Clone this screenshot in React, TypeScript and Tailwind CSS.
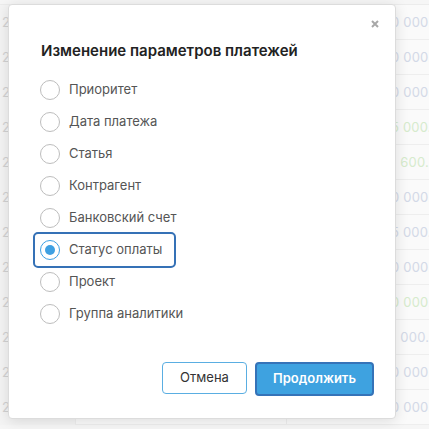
import { useState } from "react";

const OPTIONS = [
  "Приоритет",
  "Дата платежа",
  "Статья",
  "Контрагент",
  "Банковский счет",
  "Статус оплаты",
  "Проект",
  "Группа аналитики",
];

const ROWS: { sum: string; green?: boolean }[] = [
  { sum: "0 000." },
  { sum: "0 000." },
  { sum: "0 000." },
  { sum: "5 000.", green: true },
  { sum: "1 600.", green: true },
  { sum: "0 000." },
  { sum: "5 000." },
  { sum: "0 000." },
  { sum: "0 000.", green: true },
  { sum: "1 000." },
  { sum: "0 000." },
  { sum: "0 000." },
];

function BackgroundTable() {
  return (
    <div className="h-[429px] overflow-hidden bg-[#f6f6f6] pt-[4px]">
      <div className="border-t border-[#ececec] bg-[#fafafa]">
        {ROWS.map((row, i) => (
          <div
            key={i}
            className="grid h-[35px] grid-cols-[76px_211px_1fr] items-center border-b border-[#eeeeee] text-[13px]"
          >
            <div className="h-full border-r border-[#eeeeee] bg-[#f4f4f4] pl-[2px] leading-[35px] text-[#d2d2d2]">
              2
            </div>
            <div className="h-full border-r border-[#eeeeee]" />
            <div
              className="whitespace-nowrap pl-[104px] tracking-[0.2px]"
              style={{ color: row.green ? "#d6ebcd" : "#d3d9e7" }}
            >
              {row.sum}
            </div>
          </div>
        ))}
      </div>
    </div>
  );
}

export default function App() {
  const [selected, setSelected] = useState("Статус оплаты");

  return (
    <div className="relative h-[429px] w-[429px] overflow-hidden font-['Inter','Liberation_Sans',sans-serif]">
      <BackgroundTable />

      <div className="absolute left-[8px] top-[4px] flex h-[415px] w-[388px] flex-col rounded-[4px] border border-[#dcdcdc] bg-white pl-[31px] pr-[21px] pt-[36px] pb-[22px] shadow-[0_2px_14px_rgba(0,0,0,0.12)]">
        <button className="absolute right-[13px] top-[12px] flex h-[14px] w-[14px] items-center justify-center">
          <svg width="8" height="8" viewBox="0 0 8 8">
            <path d="M1 1L7 7M7 1L1 7" stroke="#a8a8a8" strokeWidth="2" />
          </svg>
        </button>

        <div className="ml-[1px] text-[15px] font-semibold leading-[20px] text-[#222]">
          Изменение параметров платежей
        </div>

        <div className="mt-[13px] flex flex-col">
          {OPTIONS.map((opt) => {
            const active = opt === selected;
            return (
              <label
                key={opt}
                onClick={() => setSelected(opt)}
                className={
                  active
                    ? "-ml-[5px] flex h-[32px] w-fit cursor-pointer items-center rounded-[3px] pl-[5px] pr-[12px] outline-2 outline-[#3571b6]"
                    : "-ml-[5px] flex h-[32px] w-fit cursor-pointer items-center pl-[5px] pr-[12px]"
                }
              >
                {active ? (
                  <span className="flex h-[20px] w-[20px] items-center justify-center rounded-full border border-[#3ea0e2]">
                    <span className="h-[10px] w-[10px] rounded-full bg-[#3ea0e2]" />
                  </span>
                ) : (
                  <span className="h-[20px] w-[20px] rounded-full border border-[#bdbdbd]" />
                )}
                <span className="ml-[9px] text-[13px] text-[#555]">{opt}</span>
              </label>
            );
          })}
        </div>

        <div className="mt-auto flex items-start justify-end gap-[8px]">
          <button className="h-[32px] w-[85px] rounded-[4px] border border-[#5aaee2] bg-white text-[13px] text-[#333]">
            Отмена
          </button>
          <button className="h-[34px] w-[119px] rounded-[4px] border-2 border-[#3573b8] bg-[#3ea2e0] text-[13px] font-semibold text-white">
            Продолжить
          </button>
        </div>
      </div>
    </div>
  );
}
